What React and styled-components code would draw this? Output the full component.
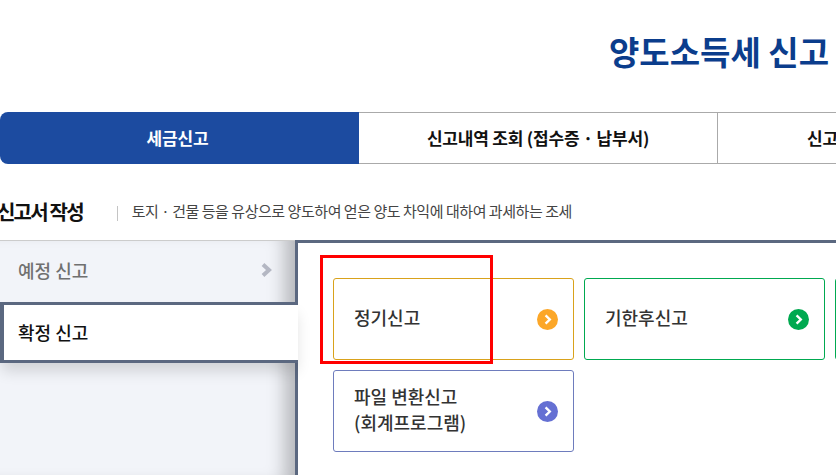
import styled, { createGlobalStyle } from 'styled-components';

const menus = [
  { id: 'due', label: '예정 신고', active: false },
  { id: 'final', label: '확정 신고', active: true },
];

const cards = [
  { id: 'regular', label: '정기신고', border: '#d9a21b', dot: '#fca728' },
  { id: 'late', label: '기한후신고', border: '#00a950', dot: '#00a950' },
  { id: 'blank', label: '', border: '#00a950', dot: '' },
  { id: 'file', label: '파일 변환신고\n(회계프로그램)', border: '#6e7cbd', dot: '#6570d3' },
];

const GlobalStyle = createGlobalStyle`
  html, body {
    margin: 0;
    height: 100%;
    overflow: hidden;
    background: #fff;
  }
  body {
    font-family: "Noto Sans CJK KR", "Noto Sans", sans-serif;
  }
`;

const Page = styled.div`
  position: relative;
  width: 836px;
  height: 475px;
  overflow: hidden;
`;
const Header = styled.header`
  display: flex;
  justify-content: flex-end;
  align-items: center;
  height: 112px;
  padding: 0 7px 8px 0;
  box-sizing: border-box;
`;
const Title = styled.h1`
  margin: 0;
  font-size: 33px;
  line-height: 1.2;
  font-weight: 700;
  color: #0b3d8c;
  white-space: nowrap;
`;
const Tabs = styled.nav`
  display: flex;
  width: 1077px;
  height: 52px;
  box-sizing: border-box;
`;
const Tab = styled.div`
  display: flex;
  flex: 0 0 359px;
  box-sizing: border-box;
  align-items: center;
  justify-content: ${(props) => (props.$start ? 'flex-start' : 'center')};
  padding-left: ${(props) => (props.$start ? '89px' : '0')};
  padding-right: ${(props) => (props.$active ? '4px' : '0')};
  padding-bottom: ${(props) => (props.$active ? '2px' : '1px')};
  font-size: 17px;
  font-weight: 700;
  letter-spacing: -0.2px;
  color: ${(props) => (props.$active ? '#fff' : '#111')};
  background: ${(props) => (props.$active ? '#1c4ba0' : '#fff')};
  border-radius: ${(props) => (props.$active ? '8px 0 0 8px' : '0')};
  border-top: ${(props) => (props.$active ? 'none' : '1px solid #aaa')};
  border-bottom: ${(props) => (props.$active ? 'none' : '1px solid #aaa')};
  border-right: ${(props) => (props.$divider ? '1px solid #aaa' : 'none')};
`;
const SectionHead = styled.div`
  display: flex;
  align-items: center;
  height: 76px;
  padding-top: 18px;
  box-sizing: border-box;
`;
const SectionTitle = styled.h2`
  margin: 0 0 0 -3px;
  font-size: 20px;
  font-weight: 700;
  letter-spacing: -1.8px;
  color: #111;
  white-space: nowrap;
`;
const SectionDesc = styled.p`
  margin: 0 0 2px 34px;
  padding-left: 15px;
  position: relative;
  font-size: 15px;
  letter-spacing: -0.46px;
  color: #444;
  white-space: nowrap;
  &::before {
    content: '';
    position: absolute;
    left: 0;
    top: 6px;
    width: 1px;
    height: 15px;
    background: #c4c4c4;
  }
`;
const Body = styled.div`
  display: flex;
  height: 235px;
`;
const Side = styled.aside`
  display: flex;
  flex-direction: column;
  flex: 0 0 295px;
  min-width: 0;
  background: #f2f4f9;
  border-top: 1px solid #ccc;
  box-sizing: border-box;
  box-shadow: inset -22px 0 18px -12px rgba(0, 0, 0, 0.25);
`;
const MenuItem = styled.div`
  display: flex;
  align-items: center;
  justify-content: space-between;
  flex: none;
  box-sizing: border-box;
  position: relative;
  z-index: ${(props) => (props.$active ? 2 : 0)};
  height: 61px;
  width: ${(props) => (props.$active ? '298px' : '295px')};
  padding: ${(props) => (props.$active ? '0 0 2px 14px' : '0 23px 3px 18px')};
  font-size: 18px;
  font-weight: 500;
  color: ${(props) => (props.$active ? '#111' : '#707070')};
  background: ${(props) => (props.$active ? '#fff' : 'transparent')};
  border-style: solid;
  border-color: #5b6880;
  border-width: ${(props) => (props.$active ? '3px 0 3px 4px' : '0')};
  box-shadow: ${(props) => (props.$active ? '0 10px 14px -2px rgba(0, 0, 0, 0.14)' : 'none')};
`;
const Panel = styled.main`
  flex: 1;
  display: grid;
  grid-template-columns: repeat(3, 241px);
  grid-auto-rows: 82px;
  gap: 10px;
  align-content: start;
  padding: 35px 0 0 35px;
  border-top: 3px solid #5b6880;
  border-left: 3px solid #5b6880;
`;
const Card = styled.div`
  display: flex;
  align-items: center;
  justify-content: space-between;
  box-sizing: border-box;
  padding: 0 15px 0 20px;
  border: 1px solid ${(props) => props.$border};
  border-radius: 3px;
  background: #fff;
`;
const CardLabel = styled.span`
  font-size: 18px;
  font-weight: 500;
  line-height: 26px;
  margin-bottom: 4px;
  color: #333;
  white-space: pre-line;
`;
const Highlight = styled.div`
  position: absolute;
  left: 320px;
  top: 255px;
  width: 173px;
  height: 109px;
  box-sizing: border-box;
  border: 3px solid #ff0000;
  pointer-events: none;
`;

const Arrow = ({ color }) => (
  <svg width="21" height="21" viewBox="0 0 21 21" aria-hidden="true">
    <circle cx="10.5" cy="10.5" r="10.5" fill={color} />
    <path d="M8.6 6.3 L12.8 10.5 L8.6 14.7" fill="none" stroke="#fff" strokeWidth="2.4" />
  </svg>
);

const MenuChevron = () => (
  <svg width="11" height="14" viewBox="0 0 11 14" aria-hidden="true">
    <path d="M2 1.5 L8 7 L2 12.5" fill="none" stroke="#b4b7c3" strokeWidth="4" />
  </svg>
);

const App = () => {
  return (
    <Page>
      <GlobalStyle />
      <Header>
        <Title>양도소득세 신고</Title>
      </Header>
      <Tabs>
        <Tab $active>세금신고</Tab>
        <Tab $divider>신고내역 조회 (접수증 · 납부서)</Tab>
        <Tab $start>신고</Tab>
      </Tabs>
      <SectionHead>
        <SectionTitle>신고서 작성</SectionTitle>
        <SectionDesc>토지 · 건물 등을 유상으로 양도하여 얻은 양도 차익에 대하여 과세하는 조세</SectionDesc>
      </SectionHead>
      <Body>
        <Side>
          {menus.map((menu) => (
            <MenuItem key={menu.id} $active={menu.active}>
              {menu.label}
              {!menu.active && <MenuChevron />}
            </MenuItem>
          ))}
        </Side>
        <Panel>
          {cards.map((card) => (
            <Card key={card.id} $border={card.border}>
              <CardLabel>{card.label}</CardLabel>
              {card.dot && <Arrow color={card.dot} />}
            </Card>
          ))}
        </Panel>
      </Body>
      <Highlight />
    </Page>
  );
};

export default App;
